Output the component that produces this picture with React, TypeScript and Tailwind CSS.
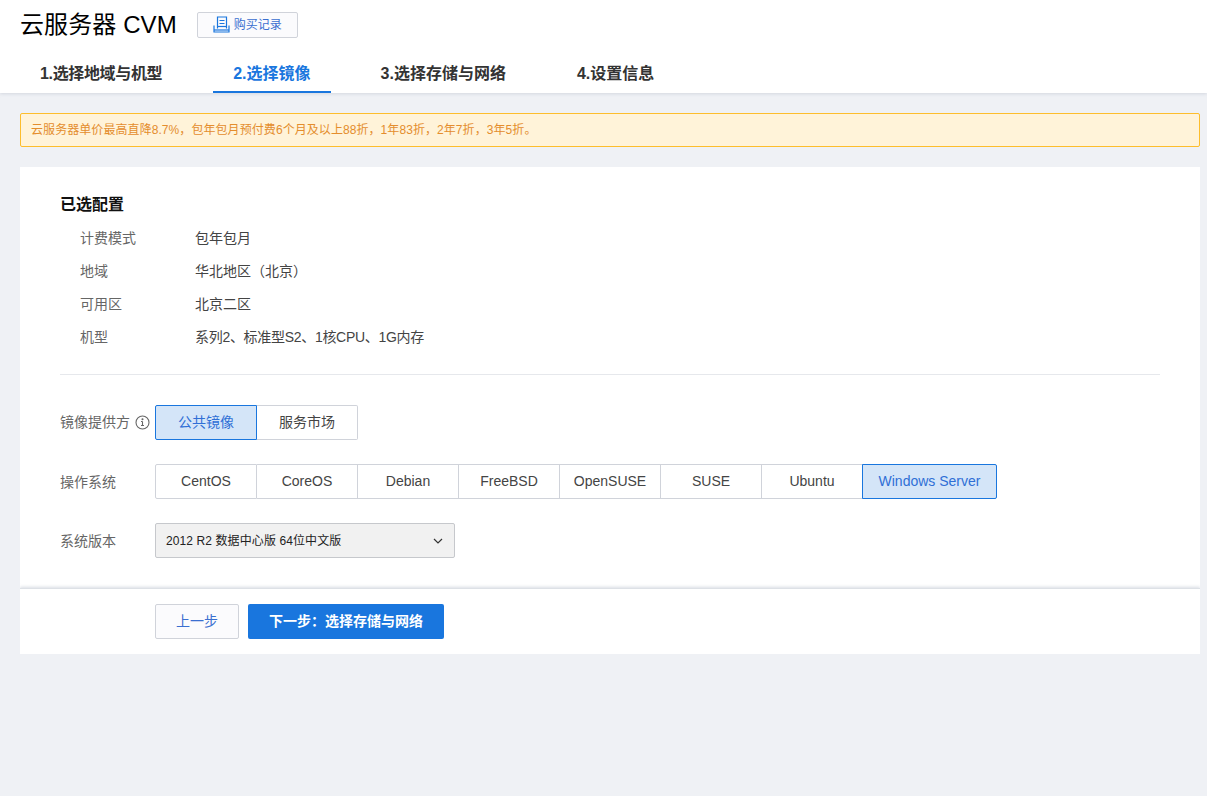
const tabs = ["1.选择地域与机型", "2.选择镜像", "3.选择存储与网络", "4.设置信息"];
const specs = [
  ["计费模式", "包年包月"],
  ["地域", "华北地区（北京）"],
  ["可用区", "北京二区"],
];
const systems = ["CentOS", "CoreOS", "Debian", "FreeBSD", "OpenSUSE", "SUSE", "Ubuntu"];

export default function App() {
  return (
    <div className="min-h-[796px] bg-[#eff1f5] font-['Liberation_Sans','Noto_Sans_CJK_SC',sans-serif] text-[14px] text-[#333333]">
      <header className="h-[93px] bg-white shadow-[0_1px_3px_rgba(190,195,205,0.55)]">
        <div className="flex items-center h-[49px] pl-[20px]">
          <h1 className="text-[24px] leading-[49px] text-black tracking-[0.1px]">云服务器 CVM</h1>
          <button className="ml-[20px] flex items-center justify-center w-[101px] h-[26px] bg-[#fbfbfd] border border-[#d0d3da] rounded-[2px] text-[12px] text-[#3a6fd0]">
            <svg width="17" height="17" viewBox="0 0 17 17" fill="none" stroke="#1976de" strokeWidth="1.2" className="mr-[4px] shrink-0">
              <path d="M4.5 12.5V1h9v11.500" />
              <path d="M6.500 4.500h5M6.500 7.500h5" />
              <path d="M4.500 10.500h9" />
              <path d="M1 9.500v6.500h15V9.500" />
              <path d="M1 14h15" />
            </svg>
            购买记录
          </button>
        </div>
        <nav className="flex gap-[30px] pl-[20px] h-[44px]">
          {tabs.map((t, i) => (
            <div
              key={t}
              className={
                i === 1
                  ? "px-[20px] h-[44px] leading-[50px] text-[16px] font-bold text-[#1976de] border-b-2 border-[#1976de]"
                  : i === 0
                    ? "pl-[20px] pr-[21px] h-[44px] leading-[50px] text-[16px] font-bold tracking-[-0.35px] text-[#333333]"
                    : i === 2
                      ? "pl-[20px] pr-[21px] h-[44px] leading-[50px] text-[16px] font-bold text-[#333333]"
                      : "px-[20px] h-[44px] leading-[50px] text-[16px] font-bold text-[#333333]"
              }
            >
              {t}
            </div>
          ))}
        </nav>
      </header>

      <div className="pl-[20px] w-[1200px]">
        <div className="mt-[20px] h-[34px] w-[1180px] flex items-center px-[10px] bg-[#fff3d9] border border-[#fdbd2c] rounded-[2px] text-[12px] tracking-[0.07px] text-[#e48d2d]">
          云服务器单价最高直降8.7%，包年包月预付费6个月及以上88折，1年83折，2年7折，3年5折。
        </div>

        <div className="mt-[20px] w-[1180px] bg-white overflow-hidden">
          <main className="h-[421px] px-[40px] pt-[28px]">
            <h2 className="text-[16px] leading-[20px] font-bold text-[#111111]">已选配置</h2>
            <dl className="mt-[7px] pl-[20px]">
              {specs.map(([k, v]) => (
                <div key={k} className="flex h-[33px] items-center">
                  <dt className="w-[115px] text-[#666666]">{k}</dt>
                  <dd className="text-[#444444]">{v}</dd>
                </div>
              ))}
              <div className="flex h-[33px] items-center">
                <dt className="w-[115px] text-[#666666]">机型</dt>
                <dd className="text-[#444444] tracking-[-0.3px]">系列2、标准型S2、1核CPU、1G内存</dd>
              </div>
            </dl>
            <div className="mt-[20px] border-t border-[#e6e8ec]" />

            <div className="mt-[30px] flex items-center h-[35px]">
              <div className="w-[95px] flex items-center text-[#666666]">
                镜像提供方
                <svg width="15" height="15" viewBox="0 0 15 15" fill="none" stroke="#666666" strokeWidth="1.1" className="ml-[5px] shrink-0">
                  <circle cx="7.500" cy="7.500" r="6.500" />
                  <path d="M7.500 6.500v4M6 6.500h1.500M6 10.500h3" />
                  <circle cx="7.500" cy="4.300" r="0.500" fill="#666666" />
                </svg>
              </div>
              <div className="flex">
                <div className="w-[102px] h-[35px] flex items-center justify-center bg-[#d4e5f8] border border-[#1976de] rounded-l-[2px] text-[#2f6fd6]">公共镜像</div>
                <div className="w-[101px] h-[35px] flex items-center justify-center border border-l-0 border-[#d0d3da] rounded-r-[2px] text-[#444444]">服务市场</div>
              </div>
            </div>

            <div className="mt-[24px] flex items-center h-[35px]">
              <div className="w-[95px] pt-[2px] text-[#666666]">操作系统</div>
              <div className="flex">
                {systems.map((s, i) => (
                  <div
                    key={s}
                    className={
                      i === 0
                        ? "w-[102px] h-[35px] flex items-center justify-center border border-[#d0d3da] rounded-l-[2px] text-[#444444]"
                        : "w-[101px] h-[35px] flex items-center justify-center border border-l-0 border-[#d0d3da] text-[#444444]"
                    }
                  >
                    {s}
                  </div>
                ))}
                <div className="w-[135px] h-[35px] flex items-center justify-center bg-[#d4e5f8] border border-[#1976de] rounded-r-[2px] -ml-px text-[#2f6fd6]">Windows Server</div>
              </div>
            </div>

            <div className="mt-[24px] flex items-center h-[35px]">
              <div className="w-[95px] pt-[2px] text-[#666666]">系统版本</div>
              <div className="w-[300px] h-[35px] flex items-center justify-between pl-[10px] pr-[11px] bg-[#f1f1f1] border border-[#c6c8cc] rounded-[2px] text-[12px] tracking-[0.1px] text-[#222222]">
                <span>2012 R2 数据中心版 64位中文版</span>
                <svg width="10" height="6" viewBox="0 0 10 6" fill="none" stroke="#333333" strokeWidth="1.2">
                  <path d="M1 1l4 4 4-4" />
                </svg>
              </div>
            </div>
          </main>

          <footer className="h-[66px] bg-white border-t border-[#dde1e6] shadow-[0_-1px_3px_rgba(190,197,208,0.6)] pl-[135px] pt-[15px] flex gap-[9px]">
            <button className="w-[84px] h-[35px] bg-[#fbfbfd] border border-[#d0d3da] rounded-[2px] text-[#3a6fd0]">上一步</button>
            <button className="w-[196px] h-[35px] bg-[#1976de] rounded-[2px] text-white font-bold">下一步：选择存储与网络</button>
          </footer>
        </div>
      </div>
    </div>
  );
}
